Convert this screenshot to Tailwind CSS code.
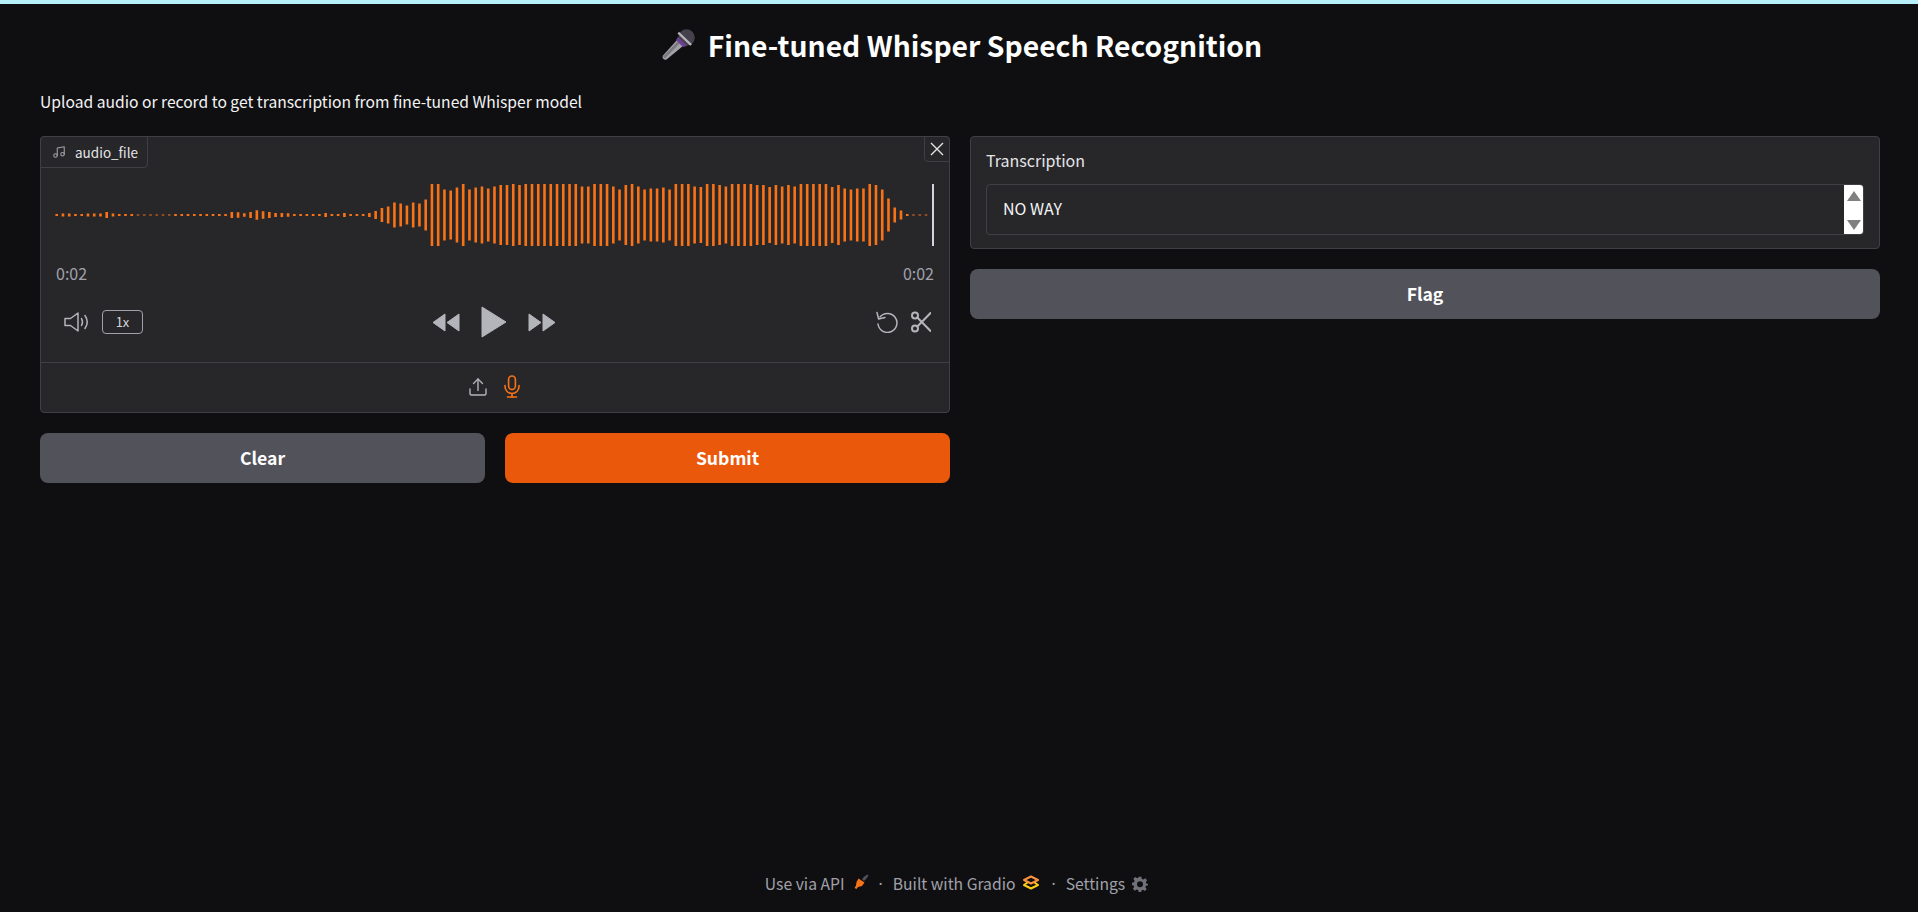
<!DOCTYPE html>
<html lang="en">
<head>
  <meta charset="UTF-8" />
  <meta name="viewport" content="width=device-width, initial-scale=1.0" />
  <script src="https://cdn.jsdelivr.net/npm/@tailwindcss/browser@4"></script>
  <title>Fine-tuned Whisper Speech Recognition</title>
</head>
<body class="bg-[#0f0f11] text-[#f4f4f5] font-['Noto_Sans_CJK_SC','Noto_Sans',sans-serif] h-screen overflow-hidden flex flex-col">
  <div class="h-[4px] bg-[#b8f0fa] shrink-0"></div>

  <main class="flex-1 pl-[40px] pr-[38px] flex flex-col">
    <!-- Title -->
    <h1 class="h-[81px] flex items-center justify-center gap-[13px] ml-[4px] text-[28.3px] leading-[40px] font-semibold text-white">
      <svg class="w-[33px] h-[31px]" viewBox="0 0 33 31">
        <path d="M15 11 L21 17 L4.5 30.5 Q2.5 31 1.2 29.8 Q0 28.5 .8 26.8 Z" fill="#a5a1a8"/>
        <path d="M1 27.5 L16 12 L18 14 L3 29.5 Z" fill="#7d7a82"/>
        <circle cx="24.5" cy="8.5" r="8.3" fill="#45414d"/>
        <path d="M16 8 L25 17 L21 18 L14 11 Z" fill="#6b3f93"/>
        <path d="M17 2.8 L30 15.2 L28.2 16.8 L15.5 4.4 Z" fill="#b7b4ba"/>
      </svg>
      <span>Fine-tuned Whisper Speech Recognition</span>
    </h1>

    <!-- Description -->
    <p class="mt-[5px] text-[15.65px] leading-[24px] text-[#f4f4f5]">Upload audio or record to get transcription from fine-tuned Whisper model</p>

    <div class="mt-[22px] grid grid-cols-2 gap-[20px] items-start">
      <!-- Left column -->
      <div class="flex flex-col gap-[20px]">
        <div class="relative h-[277px] bg-[#27272a] border border-[#3f3f46] rounded-[4px] flex flex-col">
          <div class="absolute left-[-1px] top-[-1px] h-[32px] w-[108px] flex items-center gap-[9px] pl-[11px] bg-[#27272a] border border-[#3f3f46] rounded-tl-[4px] rounded-br-[4px] text-[13.5px] leading-[20px] text-[#e4e4e7]">
            <svg class="w-[14px] h-[14px] text-[#a1a1aa]" viewBox="0 0 24 24" fill="none" stroke="currentColor" stroke-width="1.8" stroke-linecap="round" stroke-linejoin="round"><path d="M9 18V5l12-2v13"/><circle cx="6" cy="18" r="3"/><circle cx="18" cy="16" r="3"/></svg>
            <span>audio_file</span>
          </div>
          <button class="absolute right-[-1px] top-[-1px] w-[26px] h-[26px] flex items-center justify-center bg-[#27272a] border border-[#3f3f46] rounded-bl-[4px] rounded-tr-[4px] text-[#e4e4e7]">
            <svg class="w-[14px] h-[14px]" viewBox="0 0 14 14" fill="none" stroke="currentColor" stroke-width="1.4"><path d="M1 1 L13 13 M13 1 L1 13"/></svg>
          </button>

          <!-- Waveform -->
          <svg id="wave" class="mt-[47px] w-full h-[62px] shrink-0" viewBox="0 0 908 62"></svg>

          <div class="mt-[16px] px-[15px] flex justify-between text-[16px] leading-[22px] text-[#a1a1aa]">
            <span>0:02</span><span>0:02</span>
          </div>

          <!-- Player controls -->
          <div class="mt-[21px] h-[34px] px-[23px] grid grid-cols-3 items-center text-[#b4b4bb]">
            <div class="flex items-center gap-[12px]">
              <svg class="w-[26px] h-[20px]" viewBox="0 0 26 20" fill="none" stroke="currentColor" stroke-width="1.5" stroke-linejoin="round" stroke-linecap="round">
                <path d="M1 6.5 H6.5 L14 1 V19 L6.5 13.5 H1 Z"/>
                <path d="M17.5 6.5 Q19.5 10 17.5 13.5"/>
                <path d="M21 3.5 Q25.5 10 21 16.5"/>
              </svg>
              <span class="w-[41px] h-[24px] flex items-center justify-center border border-[#a1a1aa] rounded-[4px] text-[13px] leading-[16px] text-[#d4d4d8]">1x</span>
            </div>
            <div class="flex items-center justify-center gap-[21px] ml-[-2px]">
              <svg class="w-[28px] h-[19px]" viewBox="0 0 28 19" fill="currentColor" stroke="currentColor" stroke-linejoin="round"><path d="M13 1 V18 L1 9.5 Z"/><path d="M27 1 V18 L15 9.5 Z"/></svg>
              <svg class="w-[26px] h-[32px]" viewBox="0 0 26 32" fill="currentColor" stroke="currentColor" stroke-linejoin="round"><path d="M1 1 V31 L25 16 Z"/></svg>
              <svg class="w-[28px] h-[19px]" viewBox="0 0 28 19" fill="currentColor" stroke="currentColor" stroke-linejoin="round"><path d="M1 1 V18 L13 9.5 Z"/><path d="M15 1 V18 L27 9.5 Z"/></svg>
            </div>
            <div class="flex items-center justify-end gap-[13px] mr-[-5px]">
              <svg class="w-[22px] h-[22px]" viewBox="0 0 22 22" fill="none" stroke="currentColor" stroke-width="1.5" stroke-linecap="round" stroke-linejoin="round"><path d="M4 6 A9.5 9.5 0 1 1 2 13"/><path d="M1 1.5 L2.6 8 L9 6.4"/></svg>
              <svg class="w-[20px] h-[22px]" viewBox="0 0 20 22" fill="none" stroke="currentColor" stroke-width="2" stroke-linecap="round"><circle cx="4" cy="4.5" r="3"/><circle cx="4" cy="17.5" r="3"/><path d="M6.3 6.5 L19.5 20"/><path d="M6.3 15.5 L19.5 2"/></svg>
            </div>
          </div>

          <!-- Source selector -->
          <div class="mt-[23px] flex-1 border-t border-[#3f3f46] flex items-center justify-center gap-[17px] pr-[2px] pb-[2px]">
            <svg class="w-[18px] h-[18px] text-[#b4b4bb]" viewBox="0 0 18 18" fill="none" stroke="currentColor" stroke-width="1.4" stroke-linecap="round" stroke-linejoin="round"><path d="M1 11 V15.5 Q1 17 2.5 17 H15.5 Q17 17 17 15.5 V11"/><path d="M9 12.5 V1"/><path d="M4.5 5.5 L9 1 L13.5 5.5"/></svg>
            <svg class="w-[16px] h-[23px] text-[#f97316]" viewBox="0 0 16 23" fill="none" stroke="currentColor" stroke-width="1.6" stroke-linecap="round" stroke-linejoin="round"><rect x="4.6" y="1" width="6.8" height="13.5" rx="3.4"/><path d="M1 10.5 V11.5 A7 7 0 0 0 15 11.5 V10.5"/><path d="M8 18.5 V22"/><path d="M3.5 22 H12.5"/></svg>
          </div>
        </div>

        <div class="grid grid-cols-2 gap-[20px]">
          <button class="h-[50px] rounded-[8px] bg-[#52525b] text-white text-[17.6px] leading-[24px] font-semibold">Clear</button>
          <button class="h-[50px] rounded-[8px] bg-[#ea580c] text-white text-[17.6px] leading-[24px] font-semibold">Submit</button>
        </div>
      </div>

      <!-- Right column -->
      <div class="flex flex-col gap-[20px]">
        <div class="h-[113px] bg-[#27272a] border border-[#3f3f46] rounded-[4px] px-[15px] pt-[12px]">
          <div class="h-[22px] flex items-center text-[16px] leading-[22px] text-[#e4e4e7]">Transcription</div>
          <div class="mt-[13px] h-[51px] flex border border-[#3f3f46] rounded-[4px] overflow-hidden">
            <div class="flex-1 flex items-center pl-[16px] pb-[3px] text-[16px] leading-[22px] text-[#f4f4f5]">NO WAY</div>
            <div class="w-[19px] bg-white flex flex-col items-center justify-between pt-[6px] pb-[4px]">
              <div class="w-0 h-0 border-x-[7px] border-x-transparent border-b-[10px] border-b-[#808080]"></div>
              <div class="w-0 h-0 border-x-[7px] border-x-transparent border-t-[10px] border-t-[#808080]"></div>
            </div>
          </div>
        </div>
        <button class="h-[50px] rounded-[8px] bg-[#52525b] text-white text-[17.6px] leading-[24px] font-semibold">Flag</button>
      </div>
    </div>
  </main>

  <!-- Footer -->
  <footer class="h-[56px] shrink-0 flex items-start justify-center pt-[16px] pr-[5px] text-[15.7px] leading-[24px] text-[#a1a1aa]">
    <span>Use via API</span>
    <svg class="ml-[9px] mt-[2px] w-[15px] h-[15px]" viewBox="0 0 15 15"><path d="M8 5 L10.5 2.5 L13.5 .5 L14.5 1.5 L12.5 4.5 L10 7 Z" fill="#52525b"/><path d="M4.5 4.5 L10.5 8.5 L8 12 L4 13 L2.5 15 L.5 14 L2 11.5 L2.5 8 Z" fill="#f97316"/></svg>
    <span class="ml-[10px] font-['Noto_Sans']">·</span>
    <span class="ml-[10px]">Built with Gradio</span>
    <svg class="ml-[7px] mt-[3px] w-[16px] h-[15px]" viewBox="0 0 16 15" fill="none" stroke-width="2" stroke-linejoin="round"><path d="M8 1.5 L15 5 L8 8.5 L1 5 Z" stroke="#fb923c"/><path d="M4.5 7.5 L1 10 L8 13.5 L15 10 L11.5 7.5" stroke="#facc15"/></svg>
    <span class="ml-[13px] font-['Noto_Sans']">·</span>
    <span class="ml-[10px]">Settings</span>
    <svg class="ml-[7px] mt-[4px] w-[16px] h-[16px]" viewBox="0 0 24 24" fill="#71717a"><path fill-rule="evenodd" d="M10 1 H14 L14.7 4.4 L16.9 5.3 L19.8 3.4 L22.6 6.2 L20.7 9.1 L21.6 11.3 L24 12 V14 L21 14.7 L20.1 16.9 L22 19.8 L19.2 22.6 L16.3 20.7 L14.1 21.6 L14 24 H10 L9.3 21 L7.1 20.1 L4.2 22 L1.4 19.2 L3.3 16.3 L2.4 14.1 L0 14 V10 L3 9.3 L3.9 7.1 L2 4.2 L4.8 1.4 L7.7 3.3 L9.9 2.4 Z M12 8 A4.5 4.5 0 1 0 12 17 A4.5 4.5 0 1 0 12 8 Z"/></svg>
  </footer>

  <script>
    // bar heights read off the waveform, left to right
    const bars = [
      2,3,3,2,2,3,3,3,6,3,2,2,2,1,1,1,1,1,1,2,2,2,2,2,2,2,2,2,6,5.5,3.5,6,9.5,7.5,6,4,4,3.5,2,2,2,2,2,4,2,2,4,2,2,2,4,8,14,17,25,23,19,25,23,31,
      62,62,51,49,55,62,51,55,57,53,57,60,60,62,60,62,62,62,62,62,62,62,62,62,57,57,62,62,62,57,51,60,62,57,51,53,53,55,51,62,62,62,57,56,62,62,60,57,62,62,62,62,60,60,56,60,57,60,57,
      62,62,62,62,62,56,60,53,51,53,53,62,60,51,33,15,9,2,1,1,1
    ];
    const wave = document.getElementById('wave');
    let marks = '';
    bars.forEach((h, i) => {
      const x = 14.4 + i * 6.254;
      marks += `<rect x="${x.toFixed(2)}" y="${31 - h / 2}" width="2.6" height="${h}" fill="#f97316" />`;
    });
    marks += '<rect x="891" y="0" width="2" height="62" fill="#d4d4e0" />';
    wave.innerHTML = marks;
  </script>
</body>
</html>
